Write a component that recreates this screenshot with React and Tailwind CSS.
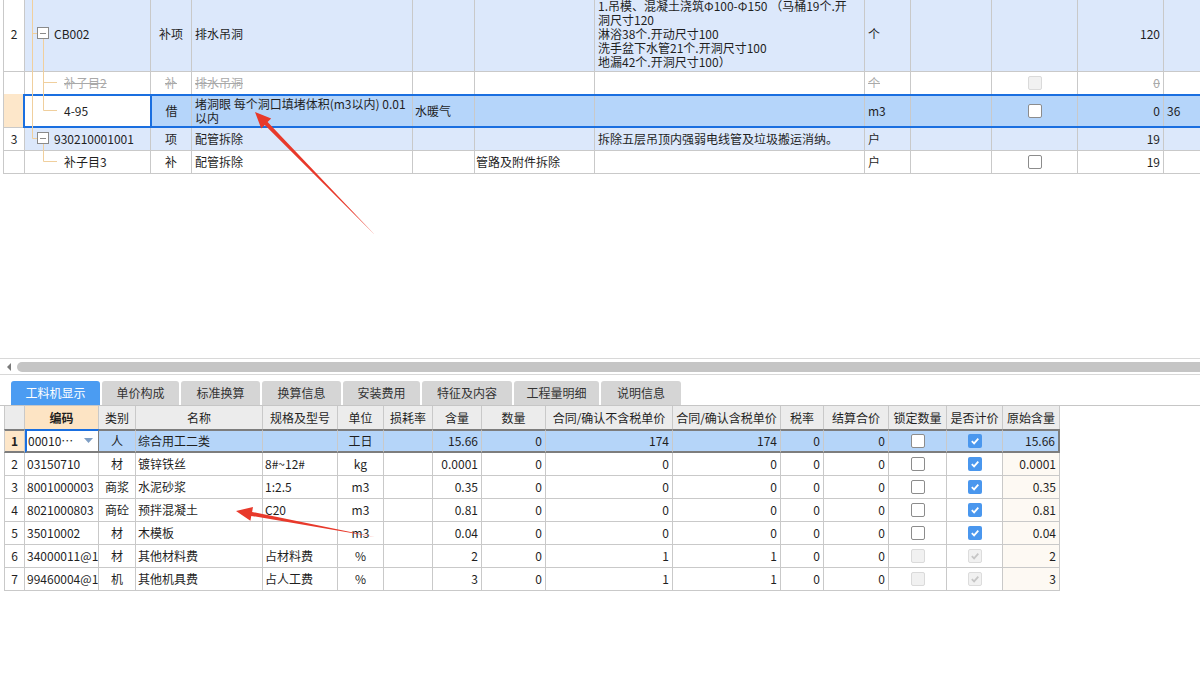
import React from "react";
import clsx from "clsx";

// ---------- small pieces ----------
const Cell = ({ w, className = "", children }) => (
  <div
    className={clsx(
      "shrink-0 h-full border-r border-[#c9c9c9] flex items-center overflow-hidden whitespace-nowrap",
      w,
      className
    )}
  >
    {children}
  </div>
);

const Check = ({ checked, disabled }) => {
  if (checked) {
    return (
      <div
        className={clsx(
          "w-[14px] h-[14px] rounded-[2px] flex items-center justify-center",
          disabled ? "bg-[#f1f1f1] border border-[#dcdcdc]" : "bg-[#4a97ee]"
        )}
      >
        <svg width="10" height="10" viewBox="0 0 10 10">
          <path
            d="M1.8 5.2 L4.1 7.4 L8.3 2.6"
            fill="none"
            stroke={disabled ? "#c6c6c6" : "#ffffff"}
            strokeWidth="1.8"
          />
        </svg>
      </div>
    );
  }
  return (
    <div
      className={clsx(
        "w-[14px] h-[14px] rounded-[2px] border",
        disabled ? "bg-[#f1f1f1] border-[#dadada]" : "bg-white border-[#8c8c8c]"
      )}
    />
  );
};

const Tab = ({ active, w, children }) => (
  <div
    className={clsx(
      "h-[24px] rounded-t-[3px] flex items-center justify-center text-[12px]",
      w,
      active ? "bg-[#4b9cf2] text-white" : "bg-[#d5d5d5] text-[#333]"
    )}
  >
    {children}
  </div>
);

// ---------- bottom table data ----------
const BW = [
  "w-[21px]",
  "w-[74px]",
  "w-[37px]",
  "w-[127px]",
  "w-[75px]",
  "w-[46px]",
  "w-[49px]",
  "w-[49px]",
  "w-[64px]",
  "w-[127px]",
  "w-[108px]",
  "w-[43px]",
  "w-[65px]",
  "w-[58px]",
  "w-[56px]",
  "w-[57px]",
];
const ALIGN = ["c", "l", "c", "l", "l", "c", "r", "r", "r", "r", "r", "r", "r", "c", "c", "r"];
const alignCls = (a) =>
  a === "c" ? "justify-center" : a === "r" ? "justify-end pr-[3px]" : "justify-start pl-[2px]";

const HEAD = ["", "编码", "类别", "名称", "规格及型号", "单位", "损耗率", "含量", "数量", "合同/确认不含税单价", "合同/确认含税单价", "税率", "结算合价", "锁定数量", "是否计价", "原始含量"];

const ROWS = [
  ["2", "03150710", "材", "镀锌铁丝", "8#~12#", "kg", "", "0.0001", "0", "0", "0", "0", "0", "u", "c", "0.0001"],
  ["3", "8001000003", "商浆", "水泥砂浆", "1:2.5", "m3", "", "0.35", "0", "0", "0", "0", "0", "u", "c", "0.35"],
  ["4", "8021000803", "商砼", "预拌混凝土", "C20", "m3", "", "0.81", "0", "0", "0", "0", "0", "u", "c", "0.81"],
  ["5", "35010002", "材", "木模板", "", "m3", "", "0.04", "0", "0", "0", "0", "0", "u", "c", "0.04"],
  ["6", "34000011@1", "材", "其他材料费", "占材料费", "%", "", "2", "0", "1", "1", "0", "0", "du", "dc", "2"],
  ["7", "99460004@1", "机", "其他机具费", "占人工费", "%", "", "3", "0", "1", "1", "0", "0", "du", "dc", "3"],
];

const renderVal = (v) => {
  if (v === "u") return <Check />;
  if (v === "c") return <Check checked />;
  if (v === "du") return <Check disabled />;
  if (v === "dc") return <Check checked disabled />;
  return v;
};

export default function App() {
  const strike = "text-[#a9a9a9] line-through";
  return (
    <div className="relative w-[1200px] h-[689px] overflow-hidden bg-white text-[12px] text-[#1f1f1f] font-['Noto_Sans_CJK_SC',sans-serif] leading-[14px]">
      {/* ========== top table ========== */}
      <div className="pl-[3px] -mt-[3px]">
        {/* row 2 */}
        <div className="flex h-[75px] bg-[#dce8fb] border-b border-[#c9c9c9]">
          <Cell w="w-[22px]" className="border-l bg-white justify-center">2</Cell>
          <Cell w="w-[126px]" className="pl-[29px]">CB002</Cell>
          <Cell w="w-[41px]" className="justify-center">补项</Cell>
          <Cell w="w-[221px]" className="pl-[3px]">排水吊洞</Cell>
          <Cell w="w-[62px]" />
          <Cell w="w-[120px]" />
          <Cell w="w-[270px]" className="pl-[3px]">
            <div className="leading-[14px]">
              <div>1.吊模、混凝土浇筑Φ100-Φ150 （马桶19个.开</div>
              <div>洞尺寸120</div>
              <div>淋浴38个.开动尺寸100</div>
              <div>洗手盆下水管21个.开洞尺寸100</div>
              <div>地漏42个.开洞尺寸100）</div>
            </div>
          </Cell>
          <Cell w="w-[46px]" className="pl-[3px]">个</Cell>
          <Cell w="w-[81px]" />
          <Cell w="w-[86px]" />
          <Cell w="w-[86px]" className="justify-end pr-[3px]">120</Cell>
          <Cell w="w-[100px]" />
        </div>

        {/* 补子目2 */}
        <div className="flex h-[22px] bg-white">
          <Cell w="w-[22px]" className="border-l" />
          <Cell w="w-[126px]" className={clsx("pl-[39px]", strike)}>补子目2</Cell>
          <Cell w="w-[41px]" className={clsx("justify-center", strike)}>补</Cell>
          <Cell w="w-[221px]" className={clsx("pl-[3px]", strike)}>排水吊洞</Cell>
          <Cell w="w-[62px]" />
          <Cell w="w-[120px]" />
          <Cell w="w-[270px]" />
          <Cell w="w-[46px]" className={clsx("pl-[3px]", strike)}>个</Cell>
          <Cell w="w-[81px]" />
          <Cell w="w-[86px]" className="justify-center">
            <Check disabled />
          </Cell>
          <Cell w="w-[86px]" className={clsx("justify-end pr-[3px]", strike)}>0</Cell>
          <Cell w="w-[100px]" />
        </div>

        {/* selected row 4-95 */}
        <div className="flex h-[34px]">
          <div className="w-[20px] h-full shrink-0 border-l border-b border-[#c9c9c9] bg-[#fde7ca]" />
          <div className="flex h-full grow border-y-2 border-l-2 border-[#1a6fe0] bg-[#b5d5fa]">
            <div className="w-[127px] h-full shrink-0 bg-white border-r-2 border-[#1a6fe0] flex items-center pl-[39px]">
              4-95
            </div>
            <Cell w="w-[40px]" className="justify-center">借</Cell>
            <Cell w="w-[221px]" className="pl-[3px]">
              <div className="leading-[14px]">
                <div>堵洞眼 每个洞口填堵体积(m3以内) 0.01</div>
                <div>以内</div>
              </div>
            </Cell>
            <Cell w="w-[62px]" className="pl-[2px]">水暖气</Cell>
            <Cell w="w-[120px]" />
            <Cell w="w-[270px]" />
            <Cell w="w-[46px]" className="pl-[3px]">m3</Cell>
            <Cell w="w-[81px]" />
            <Cell w="w-[86px]" className="justify-center">
              <Check />
            </Cell>
            <Cell w="w-[86px]" className="justify-end pr-[3px]">0</Cell>
            <Cell w="w-[100px]" className="pl-[3px]">36</Cell>
          </div>
        </div>

        {/* row 3 */}
        <div className="flex h-[23px] bg-[#dce8fb] border-b border-[#c9c9c9]">
          <Cell w="w-[22px]" className="border-l bg-white justify-center">3</Cell>
          <Cell w="w-[126px]" className="pl-[29px]">930210001001</Cell>
          <Cell w="w-[41px]" className="justify-center">项</Cell>
          <Cell w="w-[221px]" className="pl-[3px]">配管拆除</Cell>
          <Cell w="w-[62px]" />
          <Cell w="w-[120px]" />
          <Cell w="w-[270px]" className="pl-[3px]">拆除五层吊顶内强弱电线管及垃圾搬运消纳。</Cell>
          <Cell w="w-[46px]" className="pl-[3px]">户</Cell>
          <Cell w="w-[81px]" />
          <Cell w="w-[86px]" />
          <Cell w="w-[86px]" className="justify-end pr-[3px]">19</Cell>
          <Cell w="w-[100px]" />
        </div>

        {/* 补子目3 */}
        <div className="flex h-[23px] bg-white border-b border-[#c9c9c9]">
          <Cell w="w-[22px]" className="border-l" />
          <Cell w="w-[126px]" className="pl-[39px]">补子目3</Cell>
          <Cell w="w-[41px]" className="justify-center">补</Cell>
          <Cell w="w-[221px]" className="pl-[3px]">配管拆除</Cell>
          <Cell w="w-[62px]" />
          <Cell w="w-[120px]" className="pl-[1px]">管路及附件拆除</Cell>
          <Cell w="w-[270px]" />
          <Cell w="w-[46px]" className="pl-[3px]">户</Cell>
          <Cell w="w-[81px]" />
          <Cell w="w-[86px]" className="justify-center">
            <Check />
          </Cell>
          <Cell w="w-[86px]" className="justify-end pr-[3px]">19</Cell>
          <Cell w="w-[100px]" />
        </div>
      </div>

      {/* empty area */}
      <div className="h-[184px]" />

      {/* horizontal scrollbar */}
      <div className="h-[17px] border-y border-[#d8d8d8] flex items-center bg-white">
        <div className="ml-[7px] w-0 h-0 border-y-[4px] border-y-transparent border-r-[4px] border-r-[#7a7a7a]" />
        <div className="ml-[6px] grow h-[10px] rounded-l-full bg-[#c5c5c5]" />
      </div>

      {/* tabs */}
      <div className="flex gap-[2px] pl-[11px] pt-[6px] border-b border-[#c6c6c6] bg-white">
        <Tab active w="w-[89px]">工料机显示</Tab>
        <Tab w="w-[77px]">单价构成</Tab>
        <Tab w="w-[79px]">标准换算</Tab>
        <Tab w="w-[79px]">换算信息</Tab>
        <Tab w="w-[77px]">安装费用</Tab>
        <Tab w="w-[90px]">特征及内容</Tab>
        <Tab w="w-[85px]">工程量明细</Tab>
        <Tab w="w-[80px]">说明信息</Tab>
      </div>

      {/* ========== bottom table ========== */}
      <div className="pl-[4px]">
        {/* header */}
        <div className="flex h-[23px]">
          {HEAD.map((h, i) => (
            <Cell
              key={i}
              w={BW[i]}
              className={clsx(
                "justify-center",
                i === 0 && "border-l",
                i === 1 ? "bg-[#fde4c4] font-bold" : "bg-[#ececec]"
              )}
            >
              {h}
            </Cell>
          ))}
        </div>

        {/* row 1 (selected) */}
        <div className="flex h-[24px]">
          <Cell w={BW[0]} className="border-l justify-center bg-[#fde6c8] font-bold border-y-2 border-y-[#7d7d7d]">
            1
          </Cell>
          <div className="w-[74px] h-full shrink-0 bg-white border-l-2 border-l-[#1a6fe0] border-t-2 border-t-[#1a6fe0] border-b-2 border-b-[#7d7d7d] border-r border-r-[#7d7d7d] flex items-center pl-[1px]">
            <span>00010⋯</span>
            <svg className="ml-auto mr-[5px]" width="9" height="6" viewBox="0 0 9 6">
              <path d="M0 0 L9 0 L4.5 5 Z" fill="#7e9ec4" />
            </svg>
          </div>
          {["人", "综合用工二类", "", "工日", "", "15.66", "0", "174", "174", "0", "0", "u", "c", "15.66"].map((v, k) => {
            const i = k + 2;
            return (
              <Cell
                key={i}
                w={BW[i]}
                className={clsx("bg-[#b5d5f9] border-y-2 border-y-[#7d7d7d]", alignCls(ALIGN[i]), i === 15 && "border-r-2 border-r-[#7d7d7d]")}
              >
                {renderVal(v)}
              </Cell>
            );
          })}
        </div>

        {/* rows 2-7 */}
        {ROWS.map((r, ri) => (
          <div key={ri} className="flex h-[23px]">
            {r.map((v, i) => (
              <Cell
                key={i}
                w={BW[i]}
                className={clsx(
                  "border-b",
                  i === 0 && "border-l",
                  alignCls(ALIGN[i]),
                  i === 15 ? "bg-[#fdf9f3]" : "bg-white"
                )}
              >
                {renderVal(v)}
              </Cell>
            ))}
          </div>
        ))}
      </div>

      {/* tree lines + expand boxes of the top table */}
      <svg className="absolute left-0 top-0 pointer-events-none" width="1200" height="689">
        <g stroke="#f0cf9d" strokeWidth="1" fill="none">
          <path d="M32.5 0 V138.5 M32.5 33.5 H37 M32.5 138.5 H37" />
          <path d="M43.5 39 V110.5 M43.5 82.5 H57 M43.5 110.5 H57" />
          <path d="M43.5 144 V161.5 H57" />
        </g>
        <g stroke="#8a8a8a" strokeWidth="1">
          <rect x="37.5" y="27.5" width="11" height="11" fill="#fff" />
          <path d="M40 33.5 H46" />
          <rect x="37.5" y="132.5" width="11" height="11" fill="#fff" />
          <path d="M40 138.5 H46" />
        </g>
      </svg>

      {/* red annotation arrows */}
      <svg className="absolute left-0 top-0 pointer-events-none" width="1200" height="689">
        <polygon
          points="375,235 267.6,122.1 271.2,118.6 255,112 261.2,128.4 264.8,124.9"
          fill="#e8392b"
        />
        <polygon
          points="375,537 252.1,511.9 253.0,507.0 236,511 250.4,520.8 251.3,515.9"
          fill="#e8392b"
        />
      </svg>
    </div>
  );
}
